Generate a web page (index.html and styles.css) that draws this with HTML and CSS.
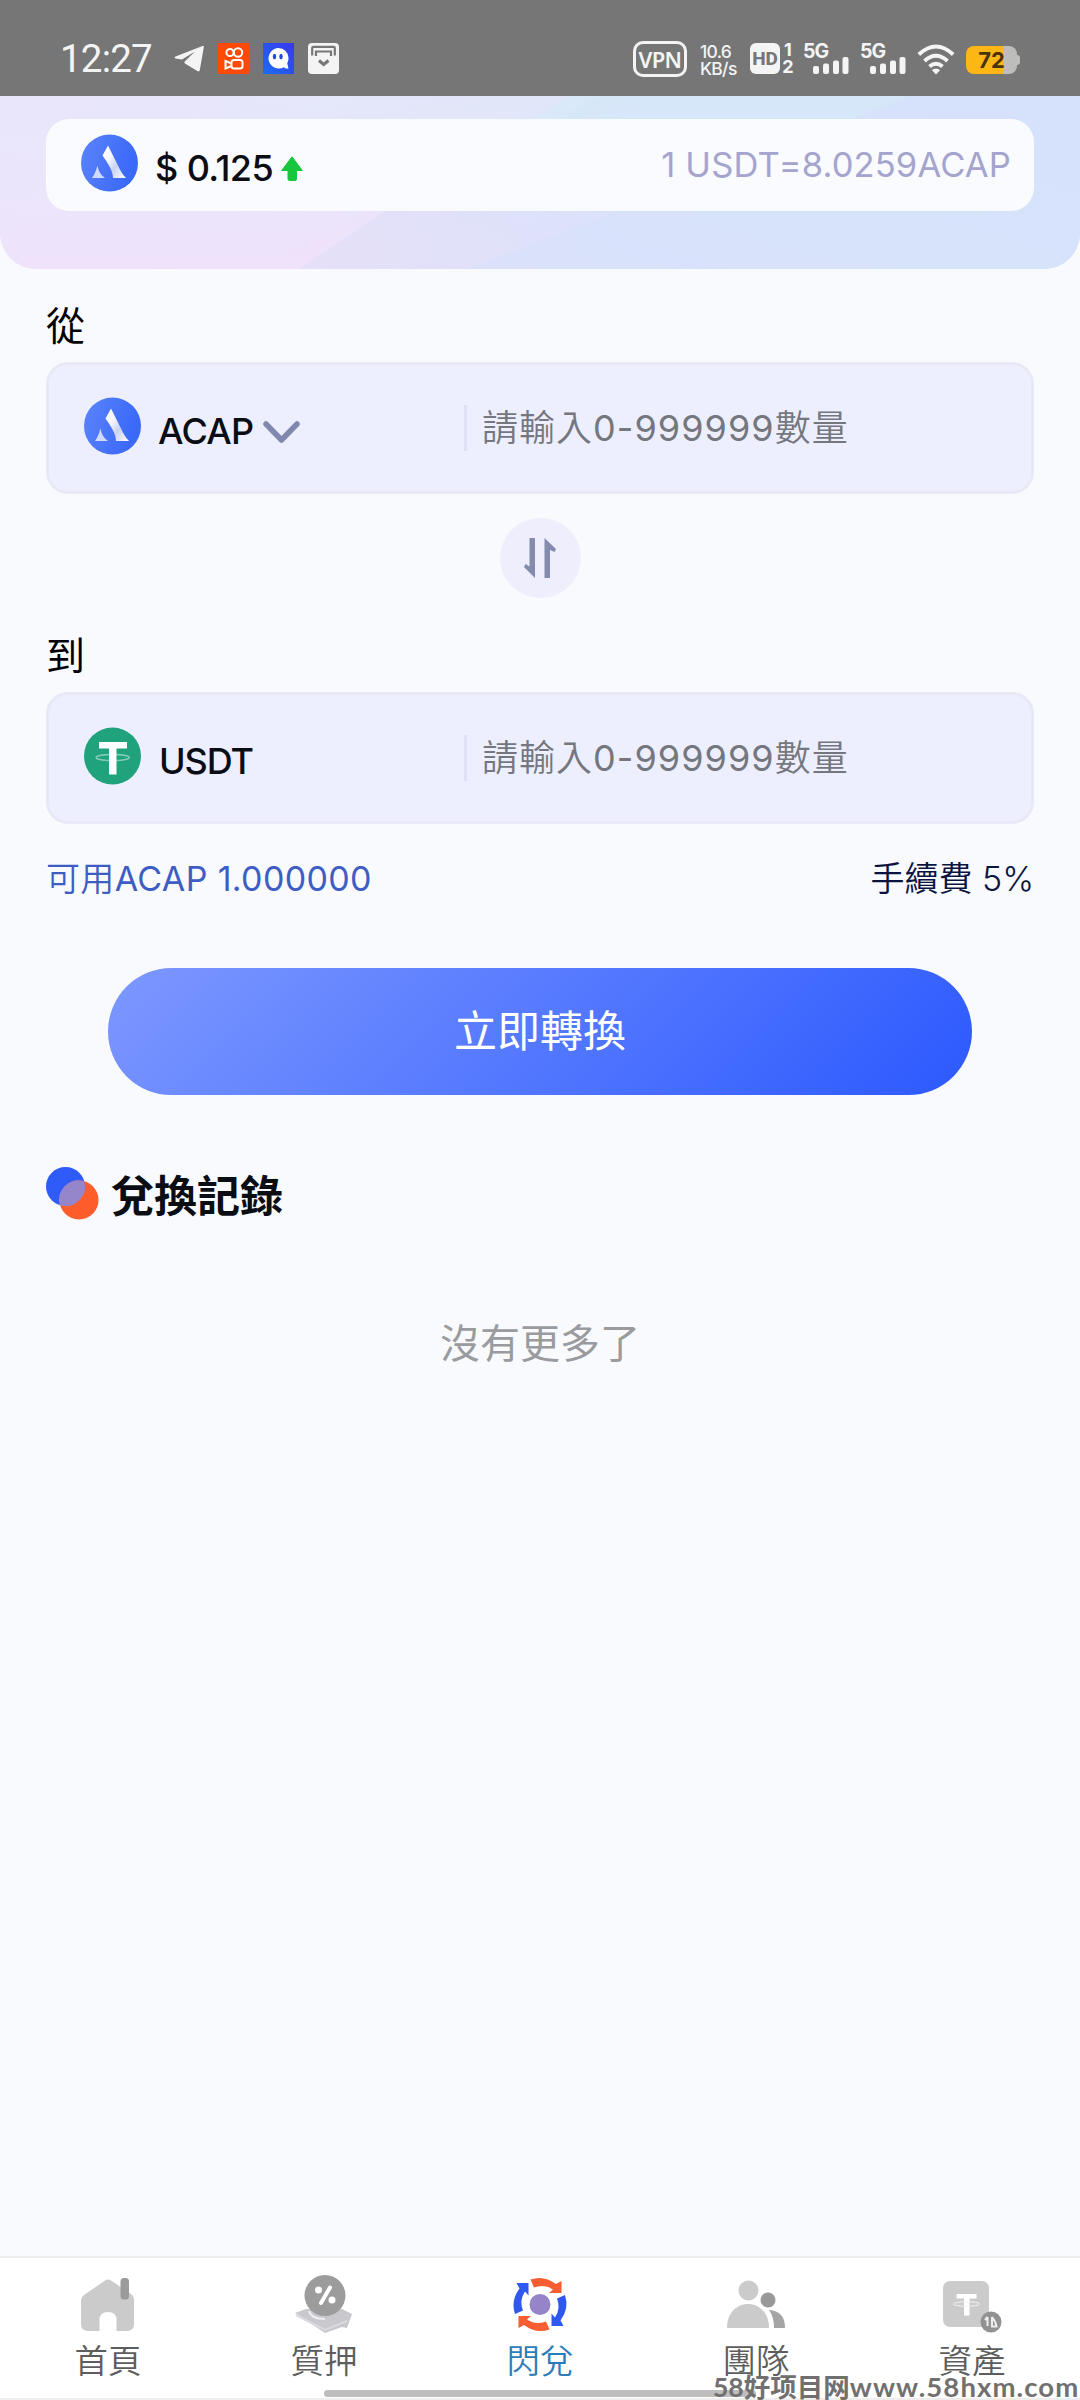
FILE: index.html
```html
<!DOCTYPE html>
<html lang="zh-Hant">
<head>
<meta charset="utf-8">
<title>閃兌</title>
<link rel="stylesheet" href="styles.css">
</head>
<body>
<svg class="defs" width="0" height="0">
  <defs>
    <linearGradient id="coinBlue" x1="0" y1="0" x2="1" y2="0.3"><stop offset="0" stop-color="#5b84fb"/><stop offset="1" stop-color="#3a68f8"/></linearGradient>
    <linearGradient id="coinLeg" x1="0" y1="0" x2="1" y2="1"><stop offset="0" stop-color="#fff"/><stop offset=".35" stop-color="#f4f6ff"/><stop offset=".6" stop-color="#c9d2f2"/><stop offset="1" stop-color="#fff"/></linearGradient>
    <linearGradient id="appBlue" x1="0" y1="1" x2="1" y2="0"><stop offset="0" stop-color="#1b6cf2"/><stop offset="1" stop-color="#3a36ee"/></linearGradient>
    <symbol id="acap" viewBox="0 0 57 57">
      <circle cx="28.500" cy="28.500" r="28.500" fill="url(#coinBlue)"/>
      <path d="M27 11 L21.500 21 C27 29 32 36 32 43.500 H45 C41 40 39 35 36.500 30 Z" fill="url(#coinLeg)"/>
      <path d="M16.500 31 C15 36 13.500 40 11 43.500 H24 C20 41 17.500 37 16.500 31 Z" fill="#cfdafd"/>
    </symbol>
    <symbol id="signal" viewBox="0 0 36 18">
      <rect x="0" y="9" width="6" height="8" rx="2"/><rect x="10" y="6.500" width="6" height="10.500" rx="2"/><rect x="20" y="3.500" width="6" height="13.500" rx="2"/><rect x="29.500" y="0" width="6" height="17" rx="2"/>
    </symbol>
  </defs>
</svg>

<div class="status">
  <span class="clock">12:27</span>
  <div class="notices">
    <svg width="30" height="28" viewBox="0 0 30 28"><path d="M28.500 1 C29.500 .7 30 1.200 29.800 2.300 L25.800 25 C25.500 26.600 24.500 26.800 23.300 26 L11 18.500 C10 17.800 10.300 17 11 16.300 L21 6.500 L8 14.500 L1.500 13.400 C.3 13 .3 12.100 1.500 11.600 Z" fill="#f4f4f4"/></svg>
    <svg width="31" height="31" viewBox="0 0 31 31"><rect width="31" height="31" rx="1" fill="#fe4a08"/><g fill="none" stroke="#fff" stroke-width="2"><circle cx="12" cy="9.500" r="3.600"/><circle cx="20" cy="9.500" r="4.200"/><rect x="13.500" y="17" width="11" height="8.500" rx="2.500"/><path d="M13.500 20.500 L7.500 18 V25.500 L13.500 23"/></g></svg>
    <svg width="31" height="31" viewBox="0 0 31 31"><rect width="31" height="31" fill="url(#appBlue)"/><path d="M15.500 5 a10 10 0 0 1 10 10 c0 2-.4 3.500-1.200 5 .2 1.700.6 3.200 1.200 5.500 -2 .4-3.500 0-4.700-1.200 A10.300 10.300 0 1 1 15.500 5Z" fill="#fff"/><ellipse cx="11.500" cy="13.500" rx="1.700" ry="2.800" fill="#2747dc"/><ellipse cx="18" cy="13.500" rx="1.700" ry="2.800" fill="#2747dc"/></svg>
    <svg width="31" height="31" viewBox="0 0 31 31"><rect width="31" height="31" rx="4" fill="#f4f4f4"/><g fill="none" stroke="#777" stroke-width="2.200"><path d="M4.200 12.500 V5 Q4.200 3.800 5.400 3.800 H25.600 Q26.800 3.800 26.800 5 V12.500"/><path d="M8 13 V8.500 H23 V13"/><path d="M11 17.500 L15.700 21.500 L20.500 17.500" stroke-width="3.200"/></g></svg>
  </div>
  <span class="vpn">VPN</span>
  <span class="speed"><span>10.6</span><span>KB/s</span></span>
  <span class="hd">HD</span>
  <span class="sims"><span>1</span><span>2</span></span>
  <span class="cell"><span>5G</span><svg width="36" height="18" fill="#f4f4f4"><use href="#signal"/></svg></span>
  <span class="cell second"><span>5G</span><svg width="36" height="18" fill="#f4f4f4"><use href="#signal"/></svg></span>
  <svg class="wifi" width="38" height="31" viewBox="0 0 38 31" fill="none" stroke="#f4f4f4" stroke-width="4"><path d="M1.800 10.500 Q19 -5.500 36.200 10.500"/><path d="M7.500 17 Q19 6.500 30.500 17"/><path d="M12.500 22.500 Q19 17 25.500 22.500"/><path d="M19 30.500 L14.800 26 Q19 22.800 23.200 26 Z" fill="#f4f4f4" stroke="none"/></svg>
  <span class="battery"><b>72</b></span>
</div>

<header class="hero">
  <svg class="hero-bg" viewBox="0 0 1080 173" preserveAspectRatio="none">
    <defs>
      <linearGradient id="sky" x1="0" y1=".8" x2="1" y2=".2"><stop offset="0" stop-color="#f1e1fa"/><stop offset=".28" stop-color="#ece3fa"/><stop offset=".55" stop-color="#dae7f8"/><stop offset="1" stop-color="#d3e2fa"/></linearGradient>
      <linearGradient id="fold"><stop offset="0" stop-color="#e3dff8"/><stop offset=".4" stop-color="#d9e1fb"/><stop offset="1" stop-color="#d8e1fb"/></linearGradient>
      <linearGradient id="top" x1="0" y1="0" x2=".7" y2="1"><stop offset="0" stop-color="#e9e6fb"/><stop offset="1" stop-color="#e9e8fb" stop-opacity="0"/></linearGradient>
    </defs>
    <rect width="1080" height="173" fill="url(#sky)"/>
    <path d="M0 0 H600 L250 173 H0Z" fill="url(#top)"/>
    <path d="M300 173 L385 115 L620 0 H1080 V173Z" fill="url(#fold)" opacity=".75"/>
    <path d="M470 173 L620 115 L900 0 H1080 V173Z" fill="#d5e1fb" opacity=".5"/>
    <path d="M530 24 L570 0 H910 L850 24Z" fill="#d6e9f8" opacity=".7"/>
  </svg>
  <div class="price-card">
    <svg class="coin" width="57" height="58"><use href="#acap"/></svg>
    <span class="price">$ 0.125</span>
    <svg class="up" width="22" height="25" viewBox="0 0 22 25"><path d="M11 .8 L21.300 14.500 H15.500 V23 Q15.500 24.500 14 24.500 H8.500 Q7 24.500 7 23 V14.500 H.7 Z" fill="#17c63d" stroke="#17c63d" stroke-linejoin="round"/></svg>
    <span class="rate">1 USDT=8.0259ACAP</span>
  </div>
</header>

<main>
  <h2 class="label">從</h2>
  <div class="field">
    <svg class="coin" width="57" height="58"><use href="#acap"/></svg>
    <span class="symbol">ACAP</span>
    <svg class="chevron" width="37" height="24" viewBox="0 0 37 24"><path d="M3 3 L18.500 19 L34 3" fill="none" stroke="#8088ae" stroke-width="5.500" stroke-linecap="round" stroke-linejoin="round"/></svg>
    <span class="amount">請輸入<i>0-999999</i>數量</span>
  </div>
  <div class="swap"><svg width="34" height="42" viewBox="0 0 34 42" fill="#848bad"><path d="M6.500 1 H12 V41 L1 30 L2.500 27 L6.500 29.500Z"/><path d="M21.500 1 L33 12 L31.500 15 L27 13 V41 H21.500Z"/></svg></div>
  <h2 class="label">到</h2>
  <div class="field">
    <svg class="coin" width="57" height="58" viewBox="0 0 57 57"><circle cx="28.500" cy="28.500" r="28.500" fill="#20a27d"/><path d="M15 14.500 H43 V21 H32.500 V47 H25 V21 H15Z" fill="#fff"/><ellipse cx="28.700" cy="30" rx="16.500" ry="3" fill="none" stroke="#fff" stroke-width="1.500" opacity=".45"/></svg>
    <span class="symbol usdt">USDT</span>
    <span class="amount">請輸入<i>0-999999</i>數量</span>
  </div>
  <div class="meta"><span class="available">可用<i>ACAP 1.000000</i></span><span class="fee">手續費 5%</span></div>
  <button class="convert">立即轉換</button>
  <div class="records">
    <svg width="53" height="53" viewBox="0 0 53 53"><circle cx="19.500" cy="19.500" r="19.500" fill="#2f5cf8"/><circle cx="33" cy="33" r="19.500" fill="#ff5d2b"/><path d="M13.800 38.200 A19.500 19.500 0 0 1 38.200 14.200 A19.500 19.500 0 0 1 13.800 38.200Z" fill="#9585cb"/></svg>
    <h3>兌換記錄</h3>
  </div>
  <p class="empty">沒有更多了</p>
</main>

<nav>
  <a class="tab"><svg width="60" height="60" viewBox="0 0 60 60"><path d="M3 27 Q3 24 6 22 L27 7.500 Q30 5.500 33 7.500 L53 21 Q56 23 56 27 V51 Q56 58 49 58 H38.500 V47 Q38.500 39 30 39 Q21.500 39 21.500 47 V58 H10 Q3 58 3 51Z" fill="#cbcbcb"/><rect x="42.500" y="5" width="8.500" height="21.500" rx="3.500" fill="#9b9b9b"/></svg><span>首頁</span></a>
  <a class="tab"><svg width="60" height="60" viewBox="0 0 60 60"><path d="M1 40 L12 36 H48 L58 41 L53 55 L48 54 L31 60Z" fill="#c9c9cd"/><path d="M2 42 L31 57 L53 48" fill="none" stroke="#d9d9df" stroke-width="2"/><path d="M15 38 Q17 46 31 46" stroke="#eee" stroke-width="2" fill="none"/><circle cx="31" cy="22.500" r="20.500" fill="#9c9c9c"/><path d="M36 14.500 L27 30" stroke="#fff" stroke-width="4" stroke-linecap="round"/><circle cx="24.500" cy="17" r="3.500" fill="#fff"/><circle cx="38" cy="27" r="3.500" fill="#fff"/></svg><span>質押</span></a>
  <a class="tab active"><svg width="60" height="60" viewBox="0 0 60 60"><circle cx="30" cy="31.500" r="10.500" fill="#9585c8"/><g id="arrows"><path d="M20.500 6.500 Q34 2 46 11 L51.500 8 V20 L39 20 L43 16.500 Q34 10.500 24 14.500Z" fill="#f95d32"/><path d="M20.500 6.500 Q34 2 46 11 L51.500 8 V20 L39 20 L43 16.500 Q34 10.500 24 14.500Z" fill="#f95d32" transform="rotate(180 30 31.500)"/><path d="M20.500 6.500 Q34 2 46 11 L51.500 8 V20 L39 20 L43 16.500 Q34 10.500 24 14.500Z" fill="#2f58ef" transform="rotate(90 30 31.500)"/><path d="M20.500 6.500 Q34 2 46 11 L51.500 8 V20 L39 20 L43 16.500 Q34 10.500 24 14.500Z" fill="#2f58ef" transform="rotate(270 30 31.500)"/></g></svg><span>閃兌</span></a>
  <a class="tab"><svg width="60" height="60" viewBox="0 0 60 60"><circle cx="22.500" cy="17.500" r="10" fill="#cbcbcb"/><path d="M1 55 C1 23 43 23 43 55Z" fill="#cbcbcb"/><circle cx="42" cy="27" r="7.500" fill="#999"/><path d="M43 37 Q59 38 59 55 H48 Q48 44 43 37Z" fill="#a5a5a5"/></svg><span>團隊</span></a>
  <a class="tab"><svg width="60" height="60" viewBox="0 0 60 60"><rect x="1" y="8" width="46" height="46" rx="7" fill="#cbcbcb"/><path d="M14.500 21 H34.500 V25.500 H27.500 V42.500 H22 V25.500 H14.500Z" fill="#fff"/><ellipse cx="24.500" cy="31" rx="13" ry="2.300" fill="none" stroke="#f4f4f4"/><circle cx="49" cy="49" r="10.500" fill="#929292"/><path d="M45.500 44 V53 M45.500 44 L43 47 M50 44 V53.500 H54.500 Q54 49 50 44" stroke="#eee" stroke-width="2" fill="none"/></svg><span>資產</span></a>
  <div class="home-bar"></div>
  <div class="watermark">58好项目网<i>www.58hxm.com</i></div>
</nav>
</body>
</html>
```
FILE: styles.css
```css
* { box-sizing: border-box; margin: 0; padding: 0; }
body { width: 1080px; height: 2400px; background: #f9fafe; font-family: Inter, "Noto Sans CJK TC", sans-serif; display: flex; flex-direction: column; overflow: hidden; color: #0b0d14; }
i { font-style: normal; }
svg { display: block; flex: none; }
.defs { position: absolute; }

.status { height: 96px; flex: none; background: #767676; color: #f4f4f4; display: flex; align-items: flex-start; padding: 43px 46px 0 60px; white-space: nowrap; }
.clock { width: 92px; font-size: 38.500px; line-height: 31px; letter-spacing: -.8px; font-family: Roboto, sans-serif; }
.notices { display: flex; gap: 14px; margin-left: 22px; width: 271px; margin-right: 188px; }
.notices svg:first-child { margin-top: 2px; }
.vpn { width: 54px; height: 36px; margin-top: -2px; border: 3px solid #f4f4f4; border-radius: 10px; font: 600 22px/31px "Noto Sans", sans-serif; letter-spacing: -.7px; text-align: center; }
.speed { margin-left: 13px; width: 37px; display: flex; flex-direction: column; font-size: 17.500px; font-weight: 500; line-height: 17px; letter-spacing: -.7px; }
.hd { margin-left: 13px; width: 30px; height: 31px; border-radius: 6px; background: #f4f4f4; color: #767676; font: 800 19px/31px Roboto, sans-serif; text-align: center; }
.sims { width: 14px; margin-left: 1px; display: flex; flex-direction: column; font: 700 18px/17px Inter, sans-serif; text-align: center; margin-top: -2px; }
.cell { width: 46px; height: 31px; margin-left: 8px; display: flex; flex-direction: column; font: 700 19.500px/16px Inter, sans-serif; letter-spacing: -1px; }
.cell svg { margin: -2px 0 0 10px; }
.cell.second { margin-left: 11px; }
.wifi { margin-left: 11px; margin-top: 1px; }
.battery { position: relative; margin: 3px 0 0 11px; width: 51px; height: 28px; border-radius: 8px; background: linear-gradient(90deg, #fdb714 72%, #bdbdbb 72%); font-size: 22px; line-height: 29px; text-align: center; color: #49330c; }
.battery::after { content: ""; position: absolute; right: -3px; top: 9px; width: 4px; height: 10px; border-radius: 0 3px 3px 0; background: #bdbdbb; }

.hero { position: relative; height: 173px; flex: none; padding: 23px 46px 0; border-radius: 0 0 36px 36px; overflow: hidden; }
.hero-bg { position: absolute; inset: 0; width: 100%; height: 100%; }
.price-card { position: relative; height: 92px; border-radius: 23px; background: #f9fbfe; display: flex; align-items: flex-start; padding: 15px 23px 0 35px; white-space: nowrap; }
.price { margin: 14px 0 0 17px; width: 126px; font-size: 36px; line-height: 40px; font-weight: 500; letter-spacing: -.6px; }
.up { margin-top: 22px; }
.rate { margin: 11px 0 0 auto; font-size: 34.500px; line-height: 40px; color: #a5a4ce; font-weight: 400; letter-spacing: .15px; }

main { flex: 1; padding: 37px 46px 0; display: flex; flex-direction: column; }
.label { font-size: 39px; line-height: 40px; font-weight: 400; color: #000; }
.field { height: 132px; flex: none; margin-top: 16px; border: 3px solid #e8e8f6; border-radius: 22px; background: #edeffe; display: flex; align-items: flex-start; padding: 32px 0 0 35px; white-space: nowrap; }
.symbol { margin: 14px 0 0 17px; width: 105px; font-size: 36px; line-height: 40px; font-weight: 500; letter-spacing: -.8px; }
.usdt { padding-left: 1px; letter-spacing: -1.100px; }
.chevron { margin-top: 24px; }
.amount { margin: 8px 0 0 auto; width: 567px; border-left: 3px solid #e1e0f6; padding-left: 15px; font-size: 36px; line-height: 46px; color: #75777f; font-weight: 350; letter-spacing: 1px; }
.amount i { font-weight: 400; letter-spacing: 1.050px; }
.swap { align-self: center; flex: none; width: 81px; height: 80px; margin: 24px 0 38px; border-radius: 50%; background: #eeeefc; display: flex; align-items: center; justify-content: center; }
.meta { display: flex; justify-content: space-between; margin-top: 35px; margin-bottom: -1px; font-size: 34px; line-height: 40px; font-weight: 350; white-space: nowrap; }
.available { color: #3e5dc4; letter-spacing: .35px; }
.available i { font-weight: 400; }
.fee { color: #0b1440; }
.convert { align-self: center; flex: none; width: 864px; height: 127px; margin-top: 70px; border: 0; border-radius: 64px; background: linear-gradient(135deg, #7d98ff 0%, #2c59fe 100%); color: #fff; font: 400 43px/127px Inter, "Noto Sans CJK TC", sans-serif; }
.records { display: flex; align-items: flex-start; margin-top: 72px; height: 60px; gap: 12px; }
.records h3 { font-size: 43px; line-height: 58px; font-weight: 700; }
.empty { margin-top: 88px; text-align: center; font-size: 40px; line-height: 58px; color: #999b9f; }

nav { position: relative; height: 144px; flex: none; background: #fff; border-top: 2px solid #ededf0; border-bottom: 2px solid #eee; display: grid; grid-template-columns: repeat(5, 1fr); }
.tab { display: flex; flex-direction: column; align-items: center; padding-top: 15px; color: #5d5d5d; font-size: 33.500px; line-height: 40px; font-weight: 350; }
.tab span { margin-top: 8px; }
.tab.active { color: #2e7db9; }
.home-bar { position: absolute; left: 324px; top: 132px; width: 432px; height: 7px; border-radius: 4px; background: #bdbdbd; }
.watermark { position: absolute; left: 713px; top: 114px; font: 700 26.500px/30px Lato, "Noto Sans CJK SC", sans-serif; color: #707070; white-space: nowrap; }
.watermark i { font-size: 27.500px; letter-spacing: 1.100px; }
```
